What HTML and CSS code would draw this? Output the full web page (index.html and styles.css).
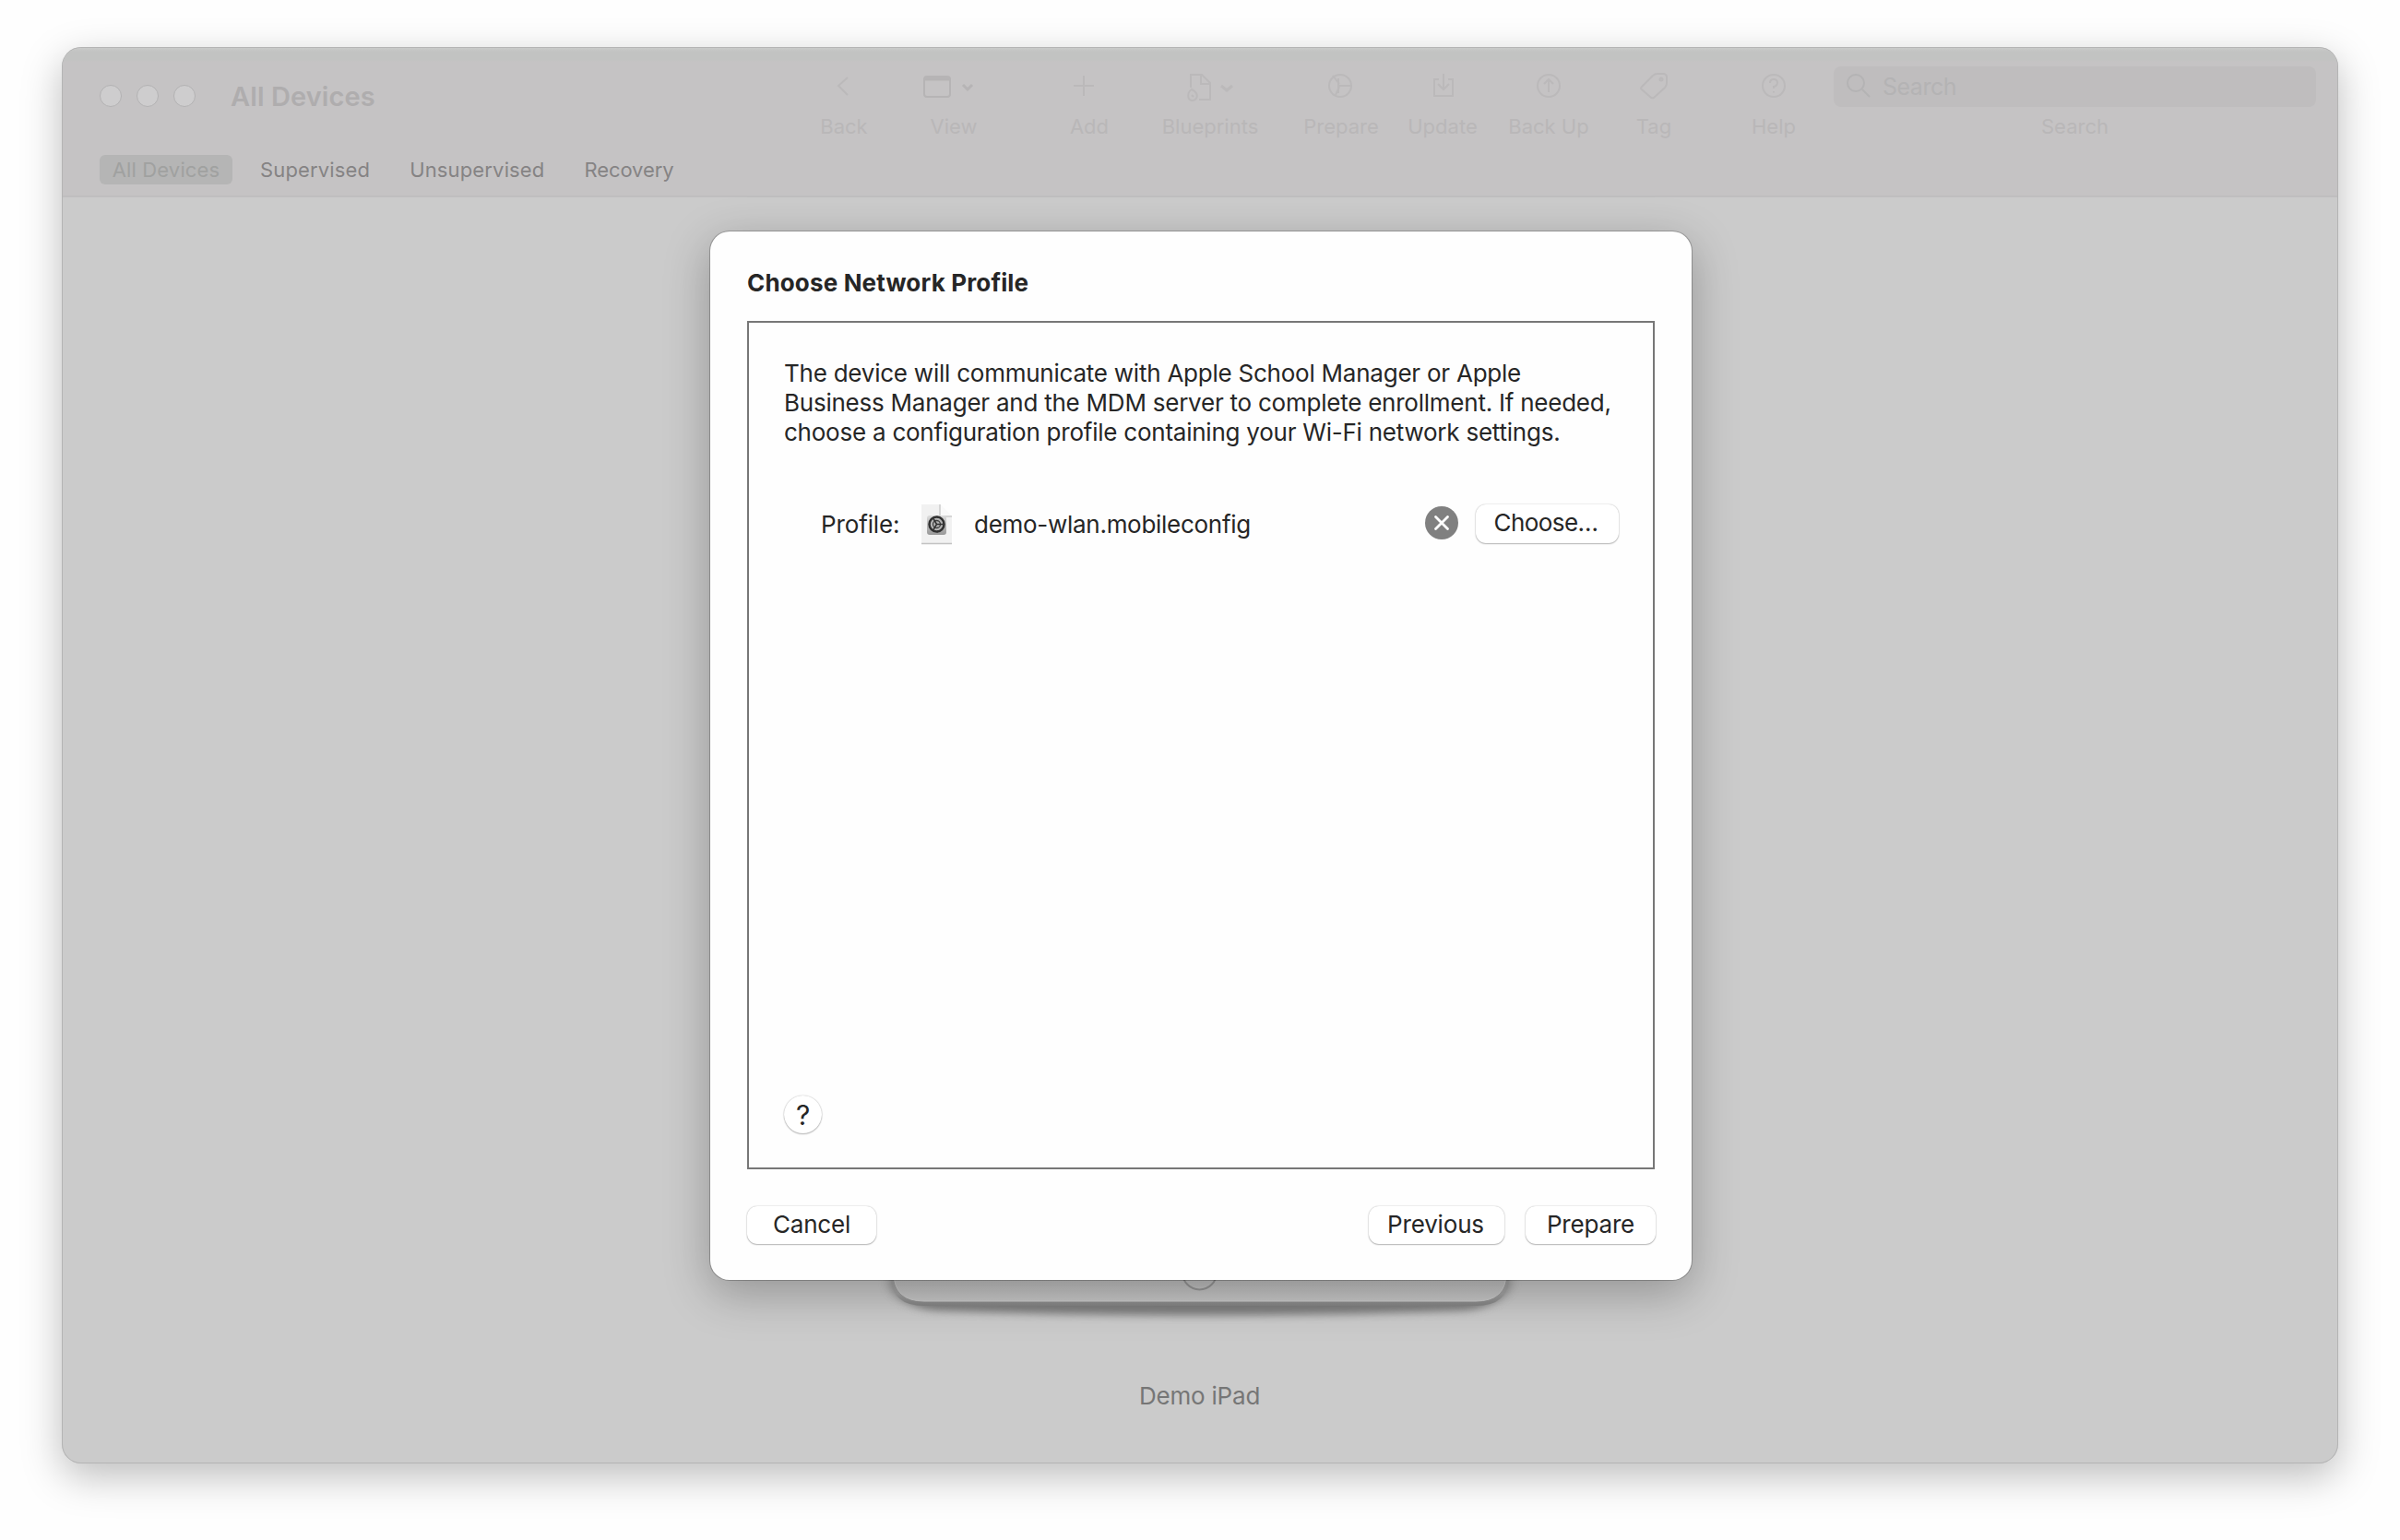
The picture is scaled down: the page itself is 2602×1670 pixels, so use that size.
FILE: index.html
```
<!DOCTYPE html>
<html lang="en">
<head>
<meta charset="utf-8">
<title>All Devices</title>
<link rel="stylesheet" href="styles.css">
</head>
<body>
<main class="window">
  <header class="chrome">
    <div class="titlebar">
      <div class="lights"><i></i><i></i><i></i></div>
      <h1 class="window-title">All Devices</h1>
      <nav class="tools">
        <div class="tool back">
          <svg width="60" height="40" viewBox="0 0 60 40"><path d="M34 11 24 20l10 10"/></svg>
          <span>Back</span>
        </div>
        <div class="tool view">
          <svg width="60" height="40" viewBox="0 0 60 40"><rect x="-2" y="10" width="28" height="22" rx="3"/><path d="M-2 12.500h28" stroke-width="4"/><path d="m40 19 5 5 5-5" stroke-width="3"/></svg>
          <span>View</span>
        </div>
        <div class="tool add">
          <svg width="60" height="40" viewBox="0 0 60 40"><path d="M13 20h22M24 9v22"/></svg>
          <span>Add</span>
        </div>
        <div class="tool blueprints">
          <svg width="110" height="40" viewBox="0 0 110 40"><path d="M34 22V8h12l9 9v18H43M45 8v10h10"/><path d="M35 24c-5 3-5 11 0 12 5 0 7-4 5-8-1-2-3-3-5-4Zm0 6 2 2"/><path d="m67 20 6 5 6-5" stroke-width="3"/></svg>
          <span>Blueprints</span>
        </div>
        <div class="tool prepare">
          <svg width="90" height="40" viewBox="0 0 90 40"><circle cx="44" cy="20" r="12"/><path d="m43 18-7-9M42 20h15M43 21l-4 9M42 12v16"/></svg>
          <span>Prepare</span>
        </div>
        <div class="tool update">
          <svg width="80" height="40" viewBox="0 0 80 40"><path d="M36 13h-5v18h20V13h-5M41 7v17m-6-6 6 6 6-6"/></svg>
          <span>Update</span>
        </div>
        <div class="tool backup">
          <svg width="90" height="40" viewBox="0 0 90 40"><circle cx="45" cy="20" r="12"/><path d="M45 27V13m-5 5 5-5 5 5"/></svg>
          <span>Back Up</span>
        </div>
        <div class="tool tag">
          <svg width="60" height="40" viewBox="0 0 60 40"><path d="m17 21 12-12q2-2 5-2h6q4 0 4 4v6q0 3-2 5L30 33q-2 1-4-1l-9-8q-2-1 0-3Z"/><circle cx="38" cy="13" r="1.500"/></svg>
          <span>Tag</span>
        </div>
        <div class="tool help">
          <svg width="60" height="40" viewBox="0 0 60 40"><circle cx="30" cy="20" r="12"/><path d="M26 17q0-4 4-4t4 3.500-4 4.500v2M30 26v1.500"/></svg>
          <span>Help</span>
        </div>
        <div class="tool search">
          <div class="search-field">
            <svg width="28" height="28" viewBox="0 0 28 28"><circle cx="10" cy="10" r="9"/><path d="m17 17 8 8"/></svg>
            <span class="placeholder">Search</span>
          </div>
          <span>Search</span>
        </div>
      </nav>
    </div>
    <nav class="tabs">
      <span class="tab selected">All Devices</span>
      <span class="tab">Supervised</span>
      <span class="tab">Unsupervised</span>
      <span class="tab recovery">Recovery</span>
    </nav>
  </header>

  <section class="devices">
    <svg class="ipad" width="760" height="120" viewBox="0 0 760 120">
      <defs>
        <filter id="soft" x="-10%" y="-50%" width="120%" height="200%"><feGaussianBlur stdDeviation="7 4"/></filter>
        <linearGradient id="face" x1="0" y1="0" x2="0" y2="1"><stop offset=".7" stop-color="#c0c0c0"/><stop offset="1" stop-color="#c8c8c8"/></linearGradient>
        <linearGradient id="edge" x1="0" y1="0" x2="0" y2="1"><stop offset=".85" stop-color="#a4a4a4"/><stop offset="1" stop-color="#858585"/></linearGradient>
      </defs>
      <path d="M46 0h668v66q-10 20-44 25-290 11-580 0-34-5-44-25Z" fill="#6c6c6c" filter="url(#soft)" opacity=".8"/>
      <path d="M45 0h670v54q0 32-36 32H81q-36 0-36-32Z" fill="url(#edge)"/>
      <path d="M48 0h664v50q0 31-33 31H81q-33 0-33-31Z" fill="url(#face)" stroke="#cfcfcf" stroke-width="1"/>
      <circle cx="379.500" cy="50" r="18.500" fill="none" stroke="#989898" stroke-width="2"/>
    </svg>
    <p class="device-name">Demo iPad</p>
  </section>

  <section class="dialog">
    <h2 class="dialog-title">Choose Network Profile</h2>
    <div class="panel">
      <p class="message">The device will communicate with Apple School Manager or Apple<br>Business Manager and the MDM server to complete enrollment. If needed,<br>choose a configuration profile containing your Wi-Fi network settings.</p>
      <div class="profile-row">
        <span class="profile-label">Profile:</span>
        <svg class="file-icon" width="38" height="48" viewBox="0 0 38 48">
          <defs><linearGradient id="badge" x1="0" y1="0" x2="0" y2="1"><stop offset="0" stop-color="#dcdcdc"/><stop offset="1" stop-color="#989898"/></linearGradient></defs>
          <path d="M2 3h20l13 13v29H2Z" fill="#f1f1f1"/>
          <path d="M22 3v13h13" fill="#fafafa" stroke="#ccc" stroke-width="1.500"/>
          <path d="M2 45.500h33" stroke="#c2c2c2" stroke-width="1.500"/>
          <rect x="8" y="15" width="21" height="21" rx="3" fill="url(#badge)"/>
          <circle cx="18.500" cy="24.500" r="8" fill="#b4b4b4" stroke="#303030" stroke-width="2.500"/>
          <circle cx="18.500" cy="24.500" r="4" fill="none" stroke="#404040" stroke-width="1.300"/>
          <path d="M18.500 24.500h7M18.500 24.500l-3.500-6M18.500 24.500l-3.500 6" stroke="#303030" stroke-width="1.500"/>
        </svg>
        <span class="file-name">demo-wlan.mobileconfig</span>
        <svg class="clear" width="36" height="36" viewBox="0 0 36 36"><circle cx="18" cy="18" r="18" fill="#808080"/><path d="m11.500 11.500 13 13m0-13-13 13" stroke="#fff" stroke-width="2.800" stroke-linecap="round"/></svg>
        <button class="button choose">Choose…</button>
      </div>
      <button class="help-button">?</button>
    </div>
    <footer class="actions">
      <button class="button cancel">Cancel</button>
      <button class="button previous">Previous</button>
      <button class="button confirm">Prepare</button>
    </footer>
  </section>
</main>
</body>
</html>
```
FILE: styles.css
```
* { box-sizing: border-box; }

body {
  margin: 0;
  padding: 51px 67px 83px;
  height: 1670px;
  background: #fefefe;
  font-family: Inter, "Liberation Sans", sans-serif;
  font-size: 26px;
  line-height: 32px;
  color: #262626;
  overflow: hidden;
}

h1, h2, p { margin: 0; }
svg { display: block; overflow: visible; flex: none; }

.window {
  position: relative;
  display: flex;
  flex-direction: column;
  height: 1536px;
  border-radius: 21px;
  background: #cbcbcb;
  box-shadow: inset 0 0 0 1px #b4b4b4, 0 14px 44px rgba(0, 0, 0, .26);
}

.chrome {
  height: 162px;
  margin: 1px 1px 0;
  border-radius: 20px 20px 0 0;
  border-bottom: 2px solid #bfbebf;
  background: linear-gradient(#c9cac9 0, #c2c3c2 4px, #c2c3c2 13px, #c5c3c4 15px);
}

.titlebar {
  display: flex;
  align-items: flex-start;
  height: 116px;
  padding-left: 40px;
}

.lights { display: flex; gap: 16px; padding-top: 40px; }
.lights i {
  width: 24px;
  height: 24px;
  border: 1px solid #b3b2b3;
  border-radius: 50%;
  background: #cecdce;
}

.window-title {
  width: 634px;
  padding: 37px 0 0 38px;
  font-size: 29px;
  font-weight: 600;
  letter-spacing: .1px;
  color: #afadae;
}

/* Toolbar items */
.tools { display: flex; }
.tool {
  display: flex;
  flex-direction: column;
  align-items: center;
  width: 60px;
  padding-top: 21px;
  font-size: 22px;
  line-height: 24px;
  white-space: nowrap;
  color: #b9b7b8;
}
.tool > span { margin-top: 12px; }
.tool svg { fill: none; stroke: #bbb9ba; stroke-width: 2; }
.back { margin-left: 39px; }
.view { margin-left: 59px; }
.tool.view svg { stroke: #b6b4b5; }
.add { margin-left: 87px; }
.blueprints { width: 110px; margin-left: 46px; }
.prepare { width: 90px; margin-left: 42px; }
.update { width: 80px; margin-left: 25px; }
.backup { width: 90px; margin-left: 30px; }
.tag { margin-left: 39px; }
.help { margin-left: 70px; }
.search { width: 523px; margin-left: 35px; padding-top: 20px; }
.search-field {
  display: flex;
  align-items: center;
  gap: 11px;
  width: 523px;
  height: 44px;
  padding-left: 14px;
  border-radius: 8px;
  background: #bfbdbe;
}
.tool .search-field svg { stroke: #b4b3b4; }
.tool .search-field + span { margin-top: 9px; }
.placeholder { font-size: 25px; letter-spacing: -.5px; color: #b4b3b4; }

/* Filter tabs */
.tabs {
  display: flex;
  align-items: center;
  height: 32px;
  padding-left: 40px;
  font-size: 22px;
  font-weight: 400;
  letter-spacing: .15px;
  color: #858384;
}
.tab { margin-right: 43px; }
.selected {
  width: 144px;
  margin-right: 30px;
  border-radius: 6px;
  background: #b5b5b5;
  color: #a0a1a0;
  text-align: center;
}
.recovery { letter-spacing: -.1px; }

.devices {
  display: flex;
  flex: 1;
  flex-direction: column;
  align-items: center;
  justify-content: flex-end;
  padding-bottom: 57px;
}
.device-name { margin: 48px 1px 0 0; color: #767676; letter-spacing: -.2px; }

/* Sheet shown over the window */
.dialog {
  position: absolute;
  left: 703px;
  top: 200px;
  display: flex;
  flex-direction: column;
  width: 1064px;
  height: 1137px;
  padding: 40px 39px 39px 40px;
  border-radius: 21px;
  background: #fefefe;
  box-shadow: 0 0 0 1px rgba(0, 0, 0, .22), 0 14px 50px rgba(0, 0, 0, .28);
}
.dialog-title { font-size: 26px; font-weight: 700; letter-spacing: .16px; }

.panel {
  display: flex;
  flex-direction: column;
  align-items: flex-start;
  width: 984px;
  height: 920px;
  margin-top: 25px;
  padding: 39px 37px 37px;
  border: 2px solid #777;
}
.message { padding-left: 1px; white-space: nowrap; letter-spacing: -.235px; }

.profile-row {
  display: flex;
  align-items: center;
  align-self: stretch;
  height: 44px;
  margin-top: 61px;
  padding-left: 41px;
}
.profile-label { width: 107px; padding-top: 2px; letter-spacing: -.12px; }
.file-name { margin-left: 21px; padding-top: 2px; letter-spacing: -.28px; }
.clear { margin: 0 0 2px auto; }

.button, .help-button {
  height: 42px;
  border: 0;
  border-radius: 11px;
  background: #fff;
  box-shadow: 0 0 1.500px rgba(0, 0, 0, .3), 0 1px 1.500px rgba(0, 0, 0, .24);
  font: 400 26px/40px Inter, "Liberation Sans", sans-serif;
  letter-spacing: -.18px;
  color: #262626;
  padding: 0 0 2px;
}
.choose { width: 155px; margin-left: 19px; padding-right: 3px; letter-spacing: -.57px; }
.help-button {
  width: 41px;
  height: 41px;
  margin: auto 0 0 1px;
  padding: 0;
  border-radius: 50%;
  font-size: 30px;
}

.actions { display: flex; margin-top: 39px; }
.actions .button { height: 41px; margin-top: 1px; line-height: 39px; }
.cancel { width: 140px; }
.previous { width: 147px; margin-left: auto; padding-right: 2px; }
.confirm { width: 141px; margin-left: 23px; }
```
